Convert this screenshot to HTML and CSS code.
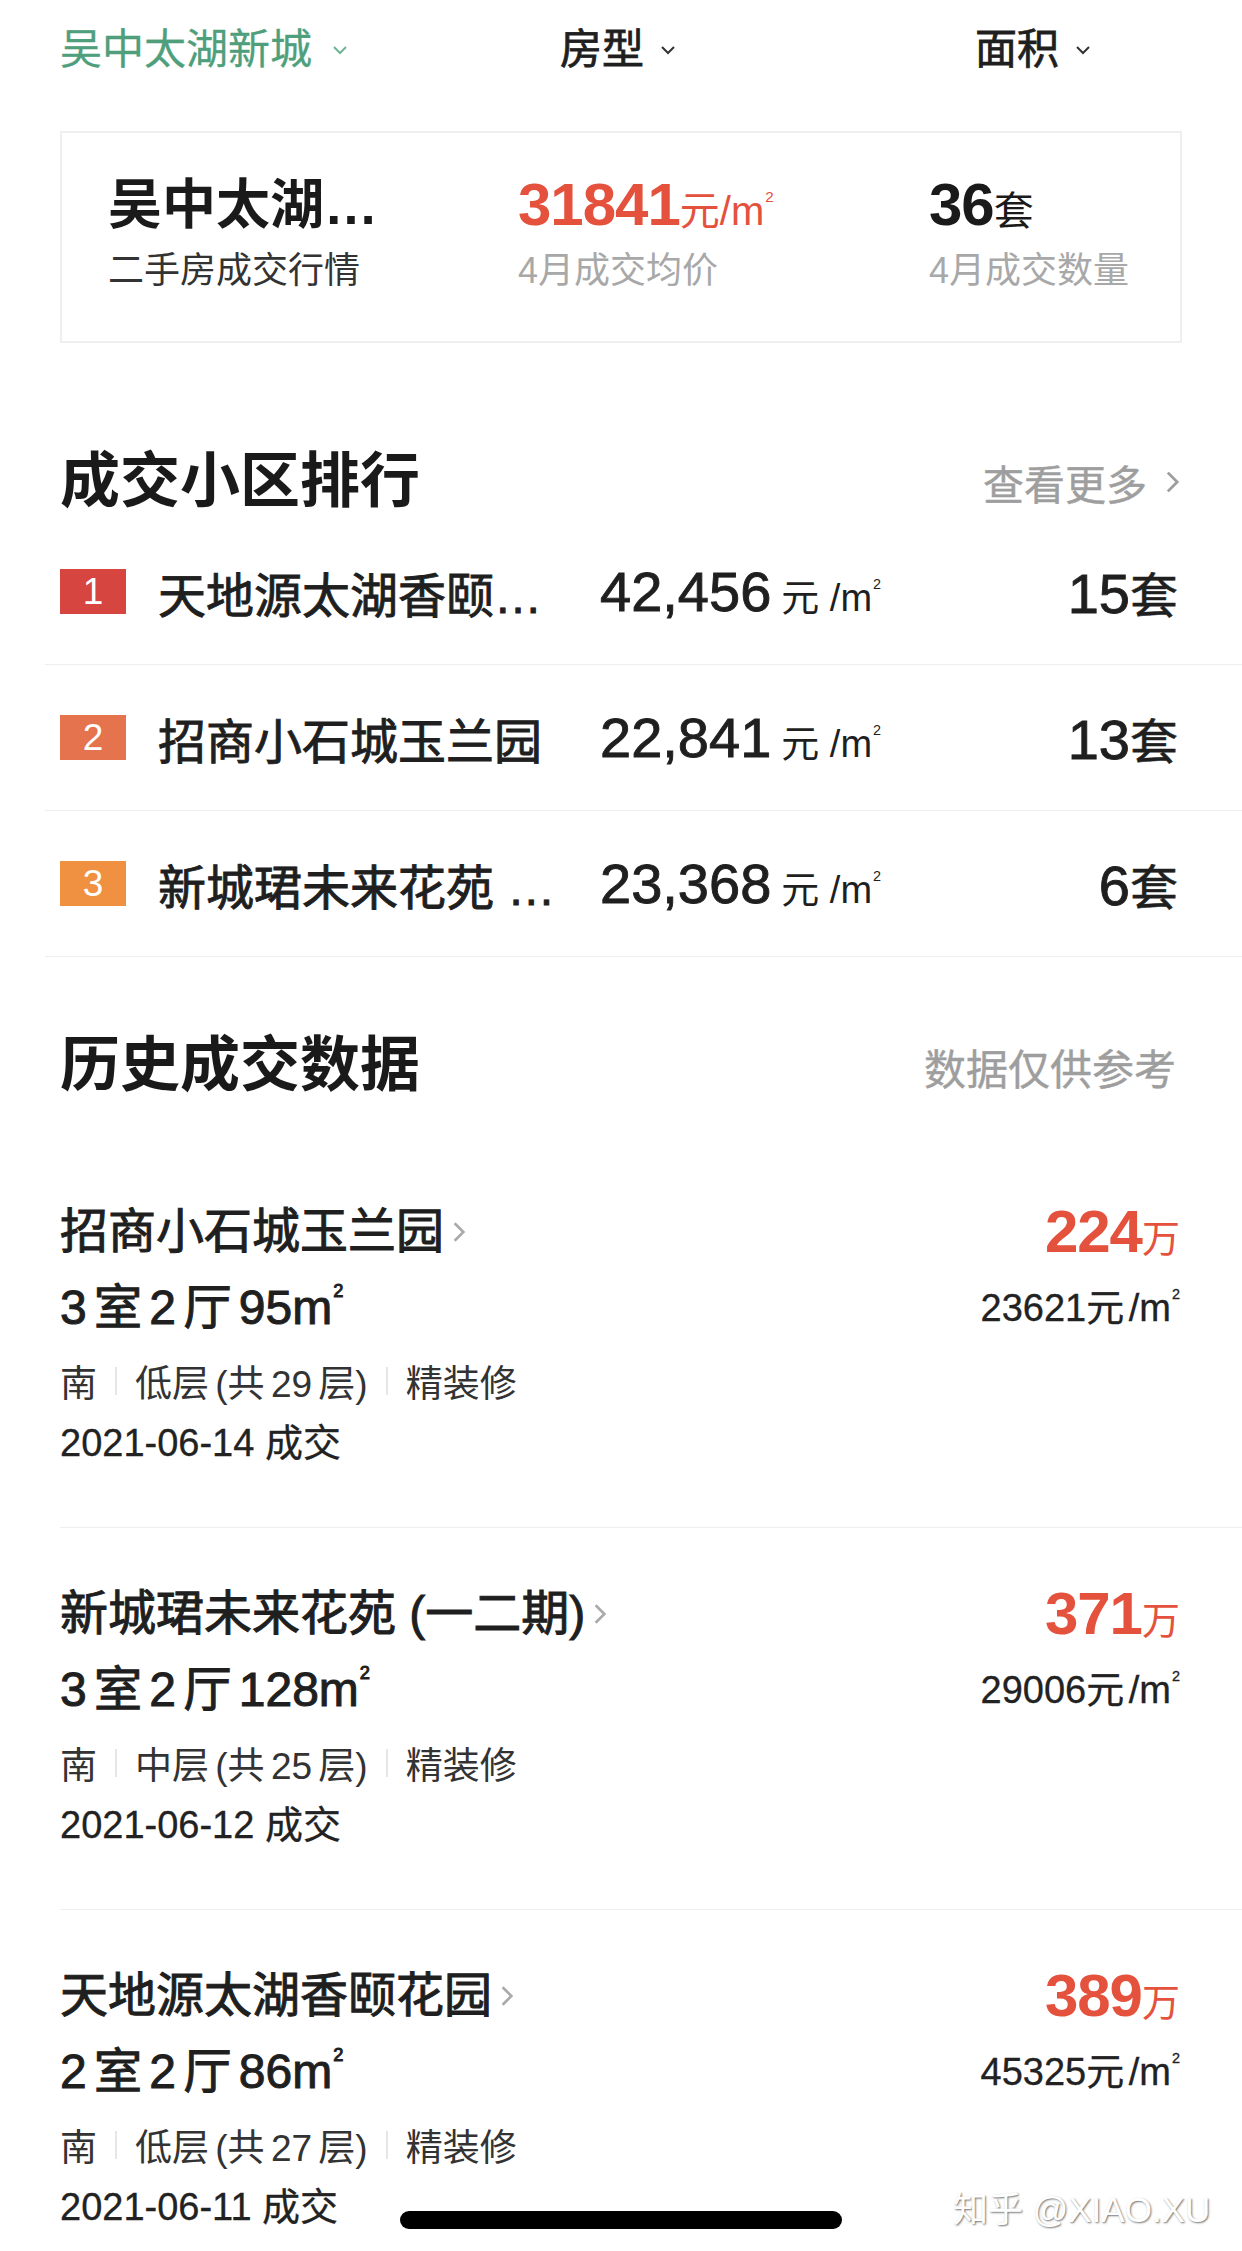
FILE: index.html
```html
<!DOCTYPE html>
<html lang="zh-CN">
<head>
    <title>二手房成交行情</title>
    <meta charset="UTF-8">
    <meta name="viewport" content="width=device-width, initial-scale=1.0">
    <link rel="stylesheet" href="styles.css">
</head>
<body>
    <div class="screen">
        <div class="filters">
            <div class="filter active">吴中太湖新城
                <svg class="caret" viewBox="0 0 16 10" width="16" height="10"><path d="M2 2 L8 8 L14 2" /></svg>
            </div>
            <div class="filter">房型
                <svg class="caret" viewBox="0 0 16 10" width="16" height="10"><path d="M2 2 L8 8 L14 2" /></svg>
            </div>
            <div class="filter">面积
                <svg class="caret" viewBox="0 0 16 10" width="16" height="10"><path d="M2 2 L8 8 L14 2" /></svg>
            </div>
        </div>

        <div class="summary">
            <div class="stat">
                <div class="stat-main stat-name">吴中太湖新城</div>
                <div class="stat-sub dark">二手房成交行情</div>
            </div>
            <div class="stat">
                <div class="stat-main red"><span class="stat-num">31841</span><span class="stat-unit">元/m<span class="sq">2</span></span></div>
                <div class="stat-sub">4月成交均价</div>
            </div>
            <div class="stat">
                <div class="stat-main"><span class="stat-num">36</span><span class="stat-unit">套</span></div>
                <div class="stat-sub">4月成交数量</div>
            </div>
        </div>

        <div class="section-head rank-head">
            <h2>成交小区排行</h2>
            <span class="more">查看更多
                <svg viewBox="0 0 16 26" width="16" height="26"><path d="M3 3 L13 13 L3 23" /></svg>
            </span>
        </div>

        <ul class="rank-list">
            <li class="rank-row">
                <span class="badge b1">1</span>
                <span class="rank-name">天地源太湖香颐花园</span>
                <span class="rank-price"><span class="num">42,456</span><span class="unit">元 /m<span class="sq">2</span></span></span>
                <span class="rank-count"><span class="num">15</span>套</span>
            </li>
            <li class="rank-row">
                <span class="badge b2">2</span>
                <span class="rank-name">招商小石城玉兰园</span>
                <span class="rank-price"><span class="num">22,841</span><span class="unit">元 /m<span class="sq">2</span></span></span>
                <span class="rank-count"><span class="num">13</span>套</span>
            </li>
            <li class="rank-row">
                <span class="badge b3">3</span>
                <span class="rank-name">新城珺未来花苑 (一二期)</span>
                <span class="rank-price"><span class="num">23,368</span><span class="unit">元 /m<span class="sq">2</span></span></span>
                <span class="rank-count"><span class="num">6</span>套</span>
            </li>
        </ul>

        <div class="section-head history-head">
            <h2>历史成交数据</h2>
            <span class="note">数据仅供参考</span>
        </div>

        <div class="deals">
            <div class="deal">
                <div class="deal-left">
                    <div class="deal-title">招商小石城玉兰园<svg viewBox="0 0 16 26" width="16" height="26"><path d="M3 3 L13 13 L3 23" /></svg></div>
                    <div class="deal-layout">3 室 2 厅 95m<span class="sq">2</span></div>
                    <div class="deal-meta">南<i class="sep"></i>低层 (共 29 层)<i class="sep"></i>精装修</div>
                    <div class="deal-date">2021-06-14 成交</div>
                </div>
                <div class="deal-right">
                    <div class="deal-price"><span class="num">224</span><span class="unit">万</span></div>
                    <div class="deal-unit">23621元 /m<span class="sq">2</span></div>
                </div>
            </div>
            <div class="deal">
                <div class="deal-left">
                    <div class="deal-title">新城珺未来花苑 (一二期)<svg viewBox="0 0 16 26" width="16" height="26"><path d="M3 3 L13 13 L3 23" /></svg></div>
                    <div class="deal-layout">3 室 2 厅 128m<span class="sq">2</span></div>
                    <div class="deal-meta">南<i class="sep"></i>中层 (共 25 层)<i class="sep"></i>精装修</div>
                    <div class="deal-date">2021-06-12 成交</div>
                </div>
                <div class="deal-right">
                    <div class="deal-price"><span class="num">371</span><span class="unit">万</span></div>
                    <div class="deal-unit">29006元 /m<span class="sq">2</span></div>
                </div>
            </div>
            <div class="deal">
                <div class="deal-left">
                    <div class="deal-title">天地源太湖香颐花园<svg viewBox="0 0 16 26" width="16" height="26"><path d="M3 3 L13 13 L3 23" /></svg></div>
                    <div class="deal-layout">2 室 2 厅 86m<span class="sq">2</span></div>
                    <div class="deal-meta">南<i class="sep"></i>低层 (共 27 层)<i class="sep"></i>精装修</div>
                    <div class="deal-date">2021-06-11 成交</div>
                </div>
                <div class="deal-right">
                    <div class="deal-price"><span class="num">389</span><span class="unit">万</span></div>
                    <div class="deal-unit">45325元 /m<span class="sq">2</span></div>
                </div>
            </div>
        </div>

        <div class="watermark">知乎 @XIAO.XU</div>
        <div class="home-bar"></div>
    </div>
</body>
</html>
```

FILE: styles.css
```css
* {
    margin: 0;
    padding: 0;
    box-sizing: border-box;
}

body {
    font-family: "Liberation Sans", "Noto Sans CJK SC", sans-serif;
    color: #1f1f1f;
    background-color: #fff;
}

.screen {
    position: relative;
    width: 1242px;
    height: 2251px;
    overflow: hidden;
    padding: 0 60px;
}

/* tiny squared mark after m */
.sq {
    font-size: 0.38em;
    line-height: 0;
    vertical-align: 1.5em;
    margin-left: 1px;
}

/* filter bar */
.filters {
    display: grid;
    grid-template-columns: 500px 415px 1fr;
    height: 100px;
    align-items: center;
}

.filter {
    display: flex;
    align-items: center;
    font-size: 42px;
    line-height: 1;
    color: #1f1f1f;
    -webkit-text-stroke: 0.8px currentColor;
}

.filter .caret {
    margin-left: 16px;
    fill: none;
    stroke: #333;
    stroke-width: 2;
}

.filter.active {
    color: #4f9f7c;
    -webkit-text-stroke: 0.3px currentColor;
}

.filter.active .caret {
    margin-left: 20px;
    stroke: #6fb294;
}

/* summary card */
.summary {
    margin-top: 31px;
    height: 212px;
    border: 2px solid #efefef;
    display: grid;
    grid-template-columns: 410px 411px 1fr;
    padding: 37px 0 0 46px;
}

.stat-main {
    height: 70px;
    display: flex;
    align-items: baseline;
    line-height: 70px;
    color: #1a1a1a;
}

.stat-main.red {
    color: #e4513d;
}

.stat-name {
    display: block;
    width: 280px;
    font-size: 54px;
    font-weight: 700;
    white-space: nowrap;
    overflow: hidden;
    text-overflow: ellipsis;
}

.stat-num {
    font-size: 60px;
    font-weight: 700;
    letter-spacing: -1px;
}

.stat-unit {
    font-size: 40px;
}

.stat-sub {
    margin-top: 6px;
    font-size: 36px;
    line-height: 50px;
    color: #a8a8a8;
}

.stat-sub.dark {
    color: #333;
}

/* section headers */
.section-head {
    display: flex;
    justify-content: space-between;
    align-items: center;
    height: 74px;
}

.section-head h2 {
    font-size: 60px;
    font-weight: 700;
    line-height: 74px;
    color: #1a1a1a;
}

.rank-head {
    margin-top: 102px;
}

.history-head {
    margin-top: 72px;
}

.more,
.note {
    display: flex;
    align-items: center;
    font-size: 41px;
    color: #9e9e9e;
    padding-right: 2px;
    -webkit-text-stroke: 0.4px currentColor;
}

.more svg {
    margin-left: 18px;
    width: 15px;
    height: 26px;
    fill: none;
    stroke: #9e9e9e;
    stroke-width: 3;
}

.note {
    font-size: 42px;
    padding-right: 6px;
}

/* ranking */
.rank-list {
    list-style: none;
    margin: 0 -60px 0 -15px;
}

.rank-row {
    display: flex;
    align-items: center;
    height: 146px;
    padding: 0 64px 0 15px;
    border-bottom: 1px solid #eeeeee;
}

.badge {
    width: 66px;
    height: 45px;
    line-height: 45px;
    text-align: center;
    color: #fff;
    font-size: 37px;
    margin-right: 32px;
    flex-shrink: 0;
}

.b1 { background-color: #d6453f; }
.b2 { background-color: #e5744e; }
.b3 { background-color: #f09142; }

.rank-name {
    width: 400px;
    margin-right: 42px;
    font-size: 48px;
    white-space: nowrap;
    overflow: hidden;
    text-overflow: ellipsis;
    -webkit-text-stroke: 0.9px currentColor;
}

.rank-price .num,
.rank-count .num {
    font-size: 56px;
    -webkit-text-stroke: 0.9px currentColor;
}

.rank-price .unit {
    font-size: 38px;
    margin-left: 10px;
}

.rank-count {
    margin-left: auto;
    font-size: 48px;
    -webkit-text-stroke: 0.6px currentColor;
}

/* deals */
.deals {
    margin: 43px -60px 0 0;
}

.deal {
    display: grid;
    grid-template-columns: 1fr auto;
    padding: 48px 62px 57px 0;
    border-bottom: 1px solid #eeeeee;
}

.deal-title {
    display: flex;
    align-items: center;
    height: 76px;
    font-size: 48px;
    line-height: 76px;
    -webkit-text-stroke: 1px currentColor;
}

.deal-title svg {
    margin-left: 8px;
    width: 14px;
    height: 24px;
    fill: none;
    stroke: #aaa;
    stroke-width: 3;
}

.deal-layout {
    height: 76px;
    font-size: 48px;
    line-height: 76px;
    word-spacing: -6px;
    -webkit-text-stroke: 1px currentColor;
}

.deal-meta {
    display: flex;
    align-items: center;
    height: 70px;
    font-size: 37px;
    color: #333;
    word-spacing: -4px;
}

.sep {
    display: inline-block;
    width: 2px;
    height: 28px;
    background-color: #e6e6e6;
    margin: 0 18px;
}

.deal-date {
    height: 54px;
    font-size: 38px;
    line-height: 54px;
    color: #222;
    -webkit-text-stroke: 0.3px currentColor;
}

.deal-right {
    text-align: right;
}

.deal-price {
    height: 76px;
    line-height: 76px;
    color: #e4513d;
}

.deal-price .num {
    font-size: 60px;
    font-weight: 700;
    letter-spacing: -1px;
}

.deal-price .unit {
    font-size: 38px;
}

.deal-unit {
    height: 76px;
    font-size: 38px;
    line-height: 76px;
    color: #222;
    word-spacing: -6px;
    -webkit-text-stroke: 0.3px currentColor;
}

/* overlays */
.watermark {
    position: absolute;
    left: 953px;
    top: 2181px;
    font-size: 35px;
    white-space: nowrap;
    color: #fff;
    text-shadow: 1px 1px 2px rgba(0, 0, 0, 0.55);
}

.home-bar {
    position: absolute;
    left: 400px;
    top: 2211px;
    width: 442px;
    height: 18px;
    border-radius: 9px;
    background-color: #000;
}
```
